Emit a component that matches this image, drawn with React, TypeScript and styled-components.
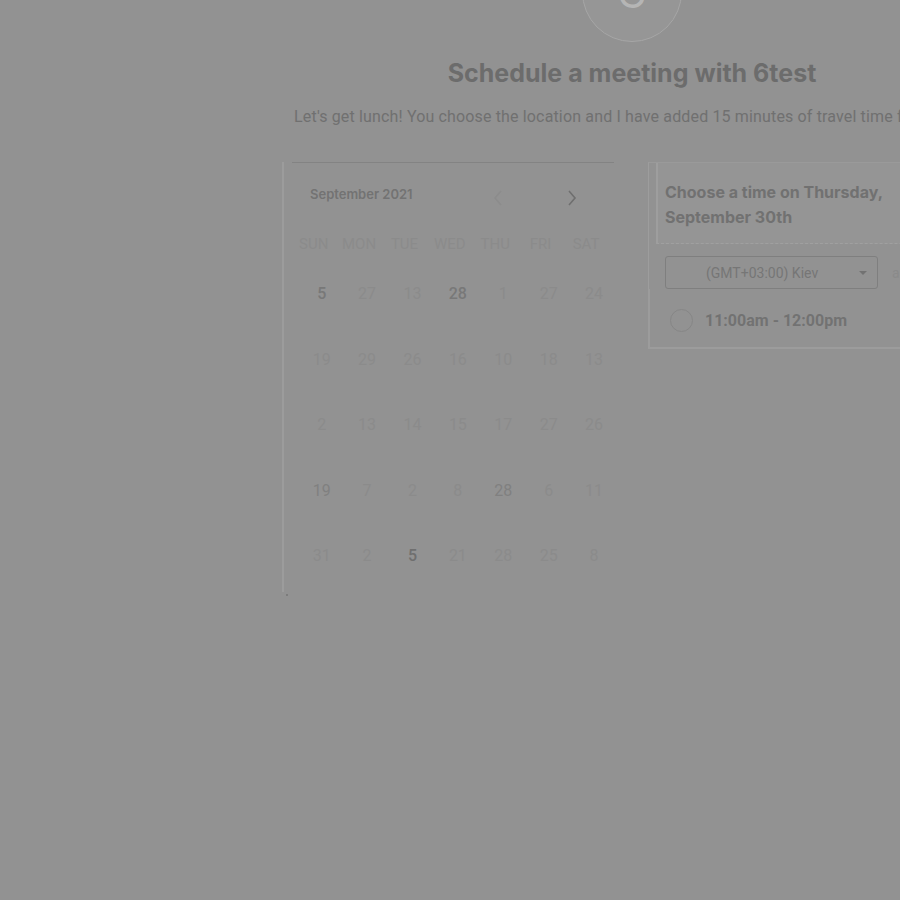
import * as React from "react";
import styled, { createGlobalStyle } from "styled-components";

const GlobalStyle = createGlobalStyle`
  html, body {
    margin: 0;
    padding: 0;
    background: #929292;
    overflow: hidden;
  }
  body {
    font-family: Roboto, "Liberation Sans", sans-serif;
  }
`;

const Page = styled.div`
  width: 1264px;
  height: 900px;
  display: flex;
  flex-direction: column;
  align-items: center;
`;

const Avatar = styled.div`
  width: 100px;
  height: 100px;
  margin-top: -58px;
  border-radius: 50%;
  background: #969696;
  border: 1px solid #a6a6a6;
  box-sizing: border-box;
  display: flex;
  align-items: center;
  justify-content: center;
  color: #b5b5b5;
  font-family: Inter, sans-serif;
  font-size: 40px;
  line-height: 40px;
  padding-top: 4px;
`;

const Title = styled.h1`
  margin: 16px 0 0;
  font-family: Inter, "Noto Sans", sans-serif;
  font-weight: 700;
  font-size: 25px;
  line-height: 30px;
  color: #6c6c6c;
`;

const Subtitle = styled.p`
  margin: 19px 0 0;
  padding-right: 18px;
  font-size: 16px;
  letter-spacing: 0.15px;
  line-height: 20px;
  color: #707070;
  white-space: nowrap;
`;

const Panels = styled.div`
  display: flex;
  gap: 34px;
  margin-top: 35px;
  align-items: flex-start;
`;

const Calendar = styled.div`
  width: 332px;
  height: 430px;
  box-sizing: border-box;
  border-left: 2px solid #9c9c9c;
  position: relative;
  padding: 0 6px 0 6px;
`;

const TopRule = styled.div`
  height: 1px;
  margin: 0 -6px 0 2px;
  background: #838383;
`;

const MonthBar = styled.div`
  display: flex;
  align-items: center;
  height: 64px;
  padding: 0 26px 0 20px;
`;

const MonthLabel = styled.span`
  font-family: Inter, sans-serif;
  font-weight: 600;
  font-size: 13px;
  color: #737373;
  margin-top: -3px;
  flex: 1;
`;

const NavButton = styled.span<{ $active?: boolean }>`
  display: flex;
  width: 20px;
  justify-content: center;
  margin-left: ${(p) => (p.$active ? "54px" : "0")};
  color: ${(p) => (p.$active ? "#6f6f6f" : "#8c8c8c")};
  margin-top: 6px;
`;

const Grid = styled.div`
  display: grid;
  grid-template-columns: repeat(7, 45.4px);
  margin-left: 1px;
  margin-top: 13px;
`;

const WeekDay = styled.div`
  text-align: center;
  font-size: 15px;
  line-height: 18px;
  color: #8b8b8b;
  height: 20px;
  margin-top: -5px;
  margin-bottom: 29px;
`;

const Day = styled.div<{ $tone: number }>`
  height: 65.6px;
  line-height: 20px;
  padding-left: 16px;
  text-align: center;
  font-size: 16px;
  font-weight: ${(p) => (p.$tone >= 2 ? 500 : 400)};
  color: ${(p) => ["#8b8b8b", "#808080", "#787878", "#6f6f6f"][p.$tone]};
  box-sizing: border-box;
`;

const Corner = styled.span`
  position: absolute;
  left: 2px;
  bottom: -4px;
  width: 2px;
  height: 2px;
  background: #7c7c7c;
`;

const TimePanel = styled.div`
  width: 334px;
  box-sizing: border-box;
  border-left: 1px solid #9d9d9d;
  border-top: 1px solid #9a9a9a;
  border-bottom: 2px solid #9c9c9c;
`;

const TimeHeader = styled.div`
  margin-left: 7px;
  border-left: 2px solid #9e9e9e;
  border-bottom: 1px dashed #a0a0a0;
  background: #959595;
  padding: 17px 0 13px 7px;
  font-family: Inter, sans-serif;
  font-weight: 700;
  font-size: 16px;
  line-height: 25px;
  color: #717171;
`;

const ZoneRow = styled.div`
  display: flex;
  align-items: center;
  gap: 14px;
  padding: 12px 0 0 16px;
`;

const ZoneSelect = styled.div`
  width: 213px;
  height: 33px;
  box-sizing: border-box;
  border: 1px solid #7f7f7f;
  border-radius: 3px;
  display: flex;
  align-items: center;
  padding: 0 10px 0 40px;
  font-size: 14px;
  color: #767676;
`;

const ZoneText = styled.span`
  flex: 1;
`;

const Caret = styled.span`
  width: 0;
  height: 0;
  border-left: 4px solid transparent;
  border-right: 4px solid transparent;
  border-top: 4px solid #727272;
`;

const ZoneExtra = styled.span`
  font-size: 14px;
  color: #8a8a8a;
`;

const SlotRow = styled.div`
  display: flex;
  align-items: center;
  gap: 12px;
  padding: 20px 0 15px 20px;
  border-left: 2px solid #9c9c9c;
  margin-left: -1px;
`;

const Radio = styled.span`
  width: 23px;
  height: 23px;
  border-radius: 50%;
  border: 1px solid #868686;
  box-sizing: border-box;
`;

const SlotText = styled.span`
  font-weight: 700;
  font-size: 16px;
  color: #727272;
`;

const weekDays = ["SUN", "MON", "TUE", "WED", "THU", "FRI", "SAT"];

// [value, tone] — tone 0 is the faint default, higher is darker
const days: [number, number][][] = [
  [[5, 2], [27, 0], [13, 0], [28, 2], [1, 0], [27, 0], [24, 0]],
  [[19, 0], [29, 0], [26, 0], [16, 0], [10, 0], [18, 0], [13, 0]],
  [[2, 0], [13, 0], [14, 0], [15, 0], [17, 0], [27, 0], [26, 0]],
  [[19, 1], [7, 0], [2, 0], [8, 0], [28, 1], [6, 0], [11, 0]],
  [[31, 0], [2, 0], [5, 3], [21, 0], [28, 0], [25, 0], [8, 0]],
];

const Chevron: React.FC<{ dir: "left" | "right" }> = ({ dir }) => (
  <svg width="10" height="16" viewBox="0 0 10 16" fill="none" stroke="currentColor" strokeWidth="1.6">
    {dir === "left" ? <path d="M8 1 L2 8 L8 15" /> : <path d="M2 1 L8 8 L2 15" />}
  </svg>
);

const App: React.FC = () => (
  <>
    <GlobalStyle />
    <Page>
      <Avatar>G</Avatar>
      <Title>Schedule a meeting with 6test</Title>
      <Subtitle>Let's get lunch! You choose the location and I have added 15 minutes of travel time for you.</Subtitle>
      <Panels>
        <Calendar>
          <TopRule />
          <MonthBar>
            <MonthLabel>September 2021</MonthLabel>
            <NavButton>
              <Chevron dir="left" />
            </NavButton>
            <NavButton $active>
              <Chevron dir="right" />
            </NavButton>
          </MonthBar>
          <Grid>
            {weekDays.map((d) => (
              <WeekDay key={d}>{d}</WeekDay>
            ))}
            {days.flat().map(([v, tone], i) => (
              <Day key={i} $tone={tone}>
                {v}
              </Day>
            ))}
          </Grid>
          <Corner />
        </Calendar>
        <TimePanel>
          <TimeHeader>
            Choose a time on Thursday,
            <br />
            September 30th
          </TimeHeader>
          <ZoneRow>
            <ZoneSelect>
              <ZoneText>(GMT+03:00) Kiev</ZoneText>
              <Caret />
            </ZoneSelect>
            <ZoneExtra>am/pm</ZoneExtra>
          </ZoneRow>
          <SlotRow>
            <Radio />
            <SlotText>11:00am - 12:00pm</SlotText>
          </SlotRow>
        </TimePanel>
      </Panels>
    </Page>
  </>
);

export default App;
